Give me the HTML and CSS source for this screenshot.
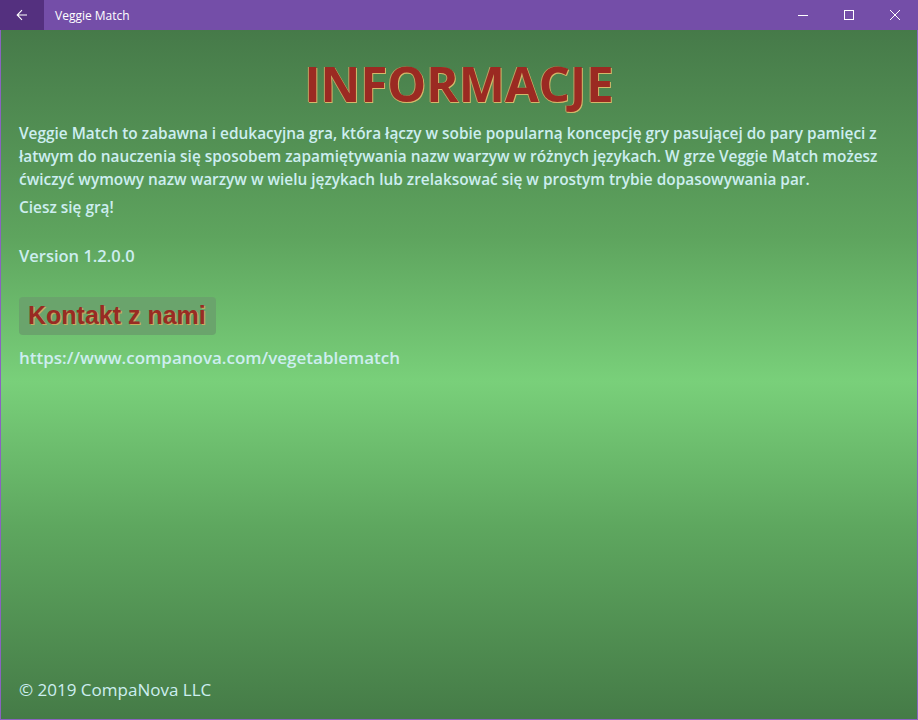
FILE: index.html
```html
<!DOCTYPE html>
<html lang="pl">
<head>
  <meta charset="UTF-8" />
  <title>Veggie Match</title>
  <link rel="stylesheet" href="styles.css">
</head>
<body>
  <div class="window">
    <div class="titlebar">
      <button class="back-btn" aria-label="Wstecz">
        <svg width="12" height="12" viewBox="0 0 12 12"><path d="M11 6H1.5M6 1.2L1.2 6L6 10.8" fill="none" stroke="#fff" stroke-width="1.1"/></svg>
      </button>
      <span class="app-title">Veggie Match</span>
      <div class="caption-btns">
        <span class="cap"><svg width="10" height="10" viewBox="0 0 10 10"><path d="M0 5.5H10" stroke="#fff" stroke-width="1"/></svg></span>
        <span class="cap"><svg width="10" height="10" viewBox="0 0 10 10"><rect x="0.5" y="0.5" width="9" height="9" fill="none" stroke="#fff" stroke-width="1"/></svg></span>
        <span class="cap"><svg width="10" height="10" viewBox="0 0 10 10"><path d="M0 0L10 10M10 0L0 10" stroke="#fff" stroke-width="1"/></svg></span>
      </div>
    </div>

    <div class="content">
      <h1 class="title">INFORMACJE</h1>
      <p class="desc">Veggie Match to zabawna i edukacyjna gra, która łączy w sobie popularną koncepcję gry pasującej do pary pamięci z łatwym do nauczenia się sposobem zapamiętywania nazw warzyw w różnych językach. W grze Veggie Match możesz ćwiczyć wymowy nazw warzyw w wielu językach lub zrelaksować się w prostym trybie dopasowywania par.</p>
      <p class="desc">Ciesz się grą!</p>
      <p class="version">Version 1.2.0.0</p>
      <div class="contact">Kontakt z nami</div>
      <p class="link">https://www.companova.com/vegetablematch</p>
      <div class="spacer"></div>
      <p class="copy">© 2019 CompaNova LLC</p>
    </div>
  </div>
</body>
</html>
```

FILE: styles.css
```css
* { box-sizing: border-box; margin: 0; padding: 0; }
html, body { height: 100%; }
body { font-family: "Open Sans", "Noto Sans", sans-serif; background: #7a52ad; }
.window { height: 720px; display: flex; flex-direction: column; border: 1px solid #8a63c0; border-top: none; }
.titlebar { height: 30px; display: flex; align-items: center; background: #744ea8; color: #fff; margin: 0 -1px; }
.back-btn { width: 44px; height: 30px; border: none; background: #54307f; display: flex; align-items: center; justify-content: center; }
.app-title { font-size: 12px; margin-left: 11px; flex: 1; }
.caption-btns { display: flex; }
.cap { width: 46px; height: 30px; display: flex; align-items: center; justify-content: center; }
.content { flex: 1; display: flex; flex-direction: column; padding: 0 18px 18px 18px;
  background: linear-gradient(to bottom, #467a49 0%, #5ea45e 30%, #79d07a 51%, #5ea75f 72%, #457b47 100%); color: #cdeef0; }
.title { font-family: "Open Sans", sans-serif; font-weight: 700; font-size: 49px; line-height: 1; text-align: center; color: #9b2a22;
  margin-top: 29px;
  text-shadow: 1px 1px 0 #d4b86a, -1px 0 0 #b9a263, 0 1px 0 #c9ae63; }
.desc { font-size: 15.4px; font-weight: 600; line-height: 23px; }
.title + .desc { margin-top: 14px; }
.desc + .desc { margin-top: 5px; }
.version { font-size: 16.5px; font-weight: 600; margin-top: 25px; }
.contact { align-self: flex-start; margin-top: 30px; background: #6aa46c; border-radius: 4px; padding: 4px 10px 5px 9px;
  font-family: "Liberation Sans", Arial, sans-serif; font-weight: 700; font-size: 25px; color: #992b23;
  text-shadow: 1px 1px 0 #c9ad5e; }
.link { font-size: 17px; font-weight: 600; margin-top: 11px; }
.spacer { flex: 1; }
.copy { font-size: 17px; }
```
